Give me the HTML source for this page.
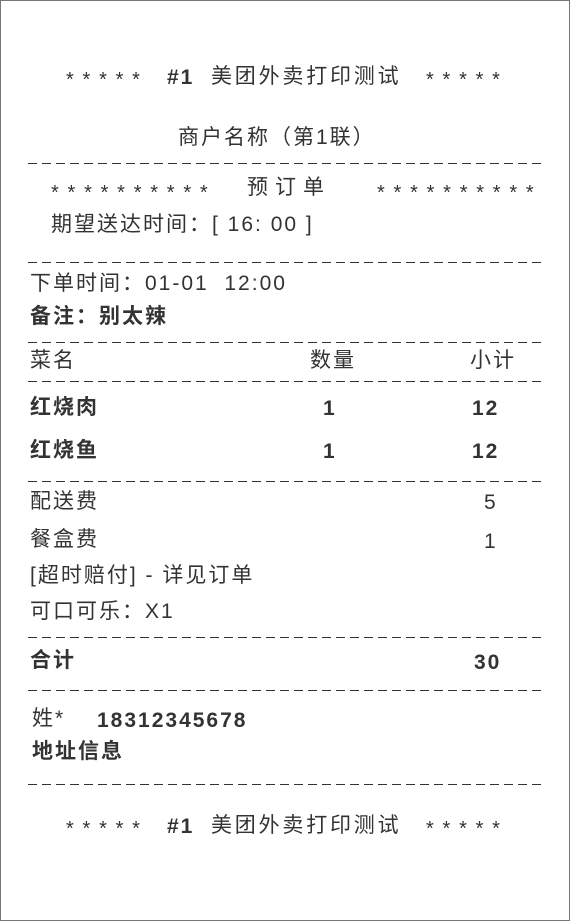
<!DOCTYPE html>
<html><head><meta charset="utf-8"><style>
body{margin:0;width:570px;height:921px;background:#fff;font-family:"Liberation Sans","Noto Sans CJK SC",sans-serif;color:#333;}
.pg{position:absolute;left:0;top:0;width:568px;height:919px;border:1px solid #777;}
.t{position:absolute;line-height:1;white-space:pre;font-size:21px;letter-spacing:2px;}
.s{font-size:20px;letter-spacing:1.6px;}
.b{font-weight:bold;}
.d{position:absolute;left:28px;width:514px;height:1px;background:repeating-linear-gradient(90deg,#333 0 9px,transparent 9px 14px);}
</style></head><body><div class="pg"></div>
<div class="t s" style="left:66px;top:70px">* * * * *</div>
<div class="t b" style="left:167px;top:67px">#1</div>
<div class="t" style="left:211px;top:66px;letter-spacing:2.8px">美团外卖打印测试</div>
<div class="t s" style="left:426px;top:70px">* * * * *</div>
<div class="t" style="left:178px;top:127px">商户名称（第1联）</div>
<div class="d" style="top:163px"></div>
<div class="t s" style="left:51px;top:183px">* * * * * * * * * *</div>
<div class="t" style="left:247px;top:177px;letter-spacing:7px">预订单</div>
<div class="t s" style="left:377px;top:183px">* * * * * * * * * *</div>
<div class="t" style="left:51px;top:214px">期望送达时间：[ 16: 00 ]</div>
<div class="d" style="top:262px"></div>
<div class="t" style="left:30px;top:273px">下单时间：01-01  12:00</div>
<div class="t b" style="left:30px;top:306px;font-weight:600">备注：别太辣</div>
<div class="d" style="top:342px"></div>
<div class="t" style="left:30px;top:350px">菜名</div>
<div class="t" style="left:310px;top:350px">数量</div>
<div class="t" style="left:470px;top:350px">小计</div>
<div class="d" style="top:381px"></div>
<div class="t b" style="left:30px;top:397px">红烧肉</div>
<div class="t b" style="left:323px;top:398px">1</div>
<div class="t b" style="left:472px;top:398px">12</div>
<div class="t b" style="left:30px;top:440px">红烧鱼</div>
<div class="t b" style="left:323px;top:441px">1</div>
<div class="t b" style="left:472px;top:441px">12</div>
<div class="d" style="top:481px"></div>
<div class="t" style="left:30px;top:491px">配送费</div>
<div class="t" style="left:484px;top:492px">5</div>
<div class="t" style="left:30px;top:529px">餐盒费</div>
<div class="t" style="left:484px;top:531px">1</div>
<div class="t" style="left:30px;top:565px">[超时赔付] - 详见订单</div>
<div class="t" style="left:30px;top:601px">可口可乐：X1</div>
<div class="d" style="top:637px"></div>
<div class="t b" style="left:30px;top:650px">合计</div>
<div class="t b" style="left:474px;top:652px">30</div>
<div class="d" style="top:690px"></div>
<div class="t" style="left:32px;top:708px">姓*</div>
<div class="t b" style="left:97px;top:710px">18312345678</div>
<div class="t b" style="left:32px;top:741px;font-weight:600">地址信息</div>
<div class="d" style="top:784px"></div>
<div class="t s" style="left:66px;top:819px">* * * * *</div>
<div class="t b" style="left:167px;top:816px">#1</div>
<div class="t" style="left:211px;top:815px;letter-spacing:2.8px">美团外卖打印测试</div>
<div class="t s" style="left:426px;top:819px">* * * * *</div>
</body></html>
